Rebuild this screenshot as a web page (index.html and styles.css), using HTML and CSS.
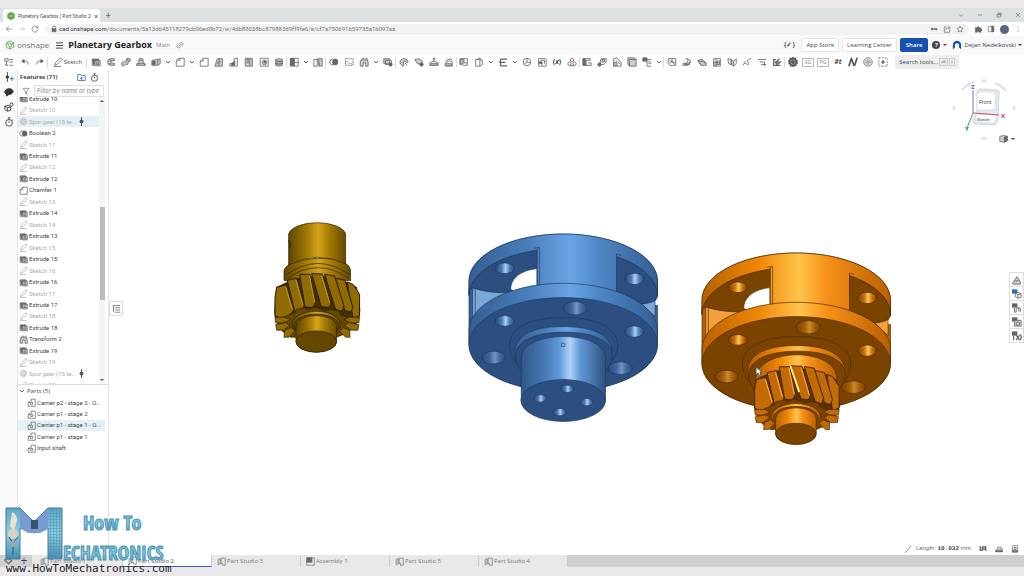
FILE: index.html
```html
<!DOCTYPE html>
<html lang="en">
<head>
<meta charset="utf-8">
<title>Planetary Gearbox | Part Studio 2</title>
<link rel="stylesheet" href="styles.css">
</head>
<body>
<svg class="defs" aria-hidden="true">
  <defs>
    <linearGradient id="blueRim"><stop offset="0" stop-color="#355e92"/><stop offset=".3" stop-color="#487cb9"/><stop offset=".54" stop-color="#6ba4e6"/><stop offset=".68" stop-color="#4f88c8"/><stop offset="1" stop-color="#345e93"/></linearGradient>
    <linearGradient id="blueBlock" gradientUnits="userSpaceOnUse" x1="27" x2="593" y1="0" y2="0" href="#blueRim"/>
    <linearGradient id="blueShaft"><stop offset="0" stop-color="#315886"/><stop offset=".25" stop-color="#4576b0"/><stop offset=".45" stop-color="#5d97d8"/><stop offset=".58" stop-color="#b0d3fb"/><stop offset=".7" stop-color="#6198d6"/><stop offset="1" stop-color="#2d5280"/></linearGradient>
    <linearGradient id="blueHole"><stop offset="0" stop-color="#25456f"/><stop offset=".35" stop-color="#4b7bb2"/><stop offset=".55" stop-color="#add0f3"/><stop offset=".75" stop-color="#4e82bd"/><stop offset="1" stop-color="#2a4c78"/></linearGradient>
    <linearGradient id="orangeRim"><stop offset="0" stop-color="#b56000"/><stop offset=".3" stop-color="#ef8706"/><stop offset=".52" stop-color="#ffc44c"/><stop offset=".66" stop-color="#f79018"/><stop offset="1" stop-color="#b96000"/></linearGradient>
    <linearGradient id="orangeBlock" gradientUnits="userSpaceOnUse" x1="27" x2="593" y1="0" y2="0" href="#orangeRim"/>
    <linearGradient id="orangeHole"><stop offset="0" stop-color="#703d00"/><stop offset=".35" stop-color="#c87008"/><stop offset=".55" stop-color="#ffc65c"/><stop offset=".75" stop-color="#cf7408"/><stop offset="1" stop-color="#764000"/></linearGradient>
    <linearGradient id="goldRim"><stop offset="0" stop-color="#604500"/><stop offset=".3" stop-color="#9b7400"/><stop offset=".52" stop-color="#d5a41c"/><stop offset=".7" stop-color="#a87d00"/><stop offset="1" stop-color="#654900"/></linearGradient>
    <symbol id="carrier" viewBox="0 0 630 620">
      <path class="m-rim" d="M27 168A283 141 0 0 1 593 168V359H27z"/>
      <path class="m-face" d="M27 211A283 141 0 0 1 593 211C594 222 586 232 540 237L440 240 150 205Q70 200 27 190z"/>
      <path class="m-rim" d="M27 168A283 141 0 0 1 593 168V211A283 141 0 0 0 27 211z"/>
      <path class="m-pillar" d="M38 189Q90 206 145 203L60 262 38 285z"/>
      <path class="m-line" d="M46 192V274"/>
      <path class="m-gap" d="M152 193C153 158 185 136 231 131V184L162 199z"/>
      <path class="m-rim-flat" d="M232 60Q350 52 470 80V210L232 190z"/>
      <path class="m-line" d="M222 70l17-2V190M470 205V87l14 5M232 70V190"/>
      <path class="m-pillar" d="M545 238Q575 234 586 227V275z"/>
      <path class="m-gap-plain" d="M595 214V240H587V229z"/>
      <path class="m-rim" d="M27 316A283 141 0 0 1 593 316V359A283 141 0 0 1 27 359z"/>
      <ellipse class="m-face" cx="310" cy="359" rx="283" ry="141"/>
      <g class="m-hole">
        <ellipse cx="134" cy="130" rx="29" ry="16"/><ellipse cx="523" cy="162" rx="29" ry="17"/>
        <ellipse cx="134" cy="288" rx="29" ry="16"/><ellipse cx="523" cy="320" rx="29" ry="17"/>
      </g>
      <g class="m-hole-dim">
        <ellipse cx="346" cy="250" rx="37" ry="20"/><ellipse cx="101" cy="398" rx="36" ry="19"/><ellipse cx="481" cy="430" rx="37" ry="19"/>
      </g>
      <path class="m-face" d="M170 415C130 370 130 278 310 278S495 370 450 415z"/>
      <path class="m-rim" d="M182 428C145 375 160 305 310 305S475 375 440 428z"/>
      <path class="m-face" d="M184 438C145 385 170 324 310 322S485 385 437 438z"/>
    </symbol>
    <symbol id="pinion" viewBox="0 0 340 450">
      <path class="m-deep" d="M50 232Q172 165 290 232L300 300Q300 350 250 372H90Q42 350 44 300z"/>
      <g class="m-tooth">
        <path d="M262 216l17 7 20 30v65l-20 6z"/><path d="M226 205l29 6 24 82-7 14-17-5z"/><path d="M194 193l30 5 28 90-5 16-20-5z"/>
        <path d="M155 191l32 1 26 90-7 11-22-3z"/><path d="M119 194l31-1 17 85-9 15-23-2z"/>
        <path d="M82 211l28-6 23 80-5 19-23 4z"/><path d="M50 232l28-7 24 76-27 29-30-12v-55z"/>
      </g>
      <path class="m-shine" d="M148 196l16 80M185 197l24 82M108 210l20 74M77 230l20 68"/>
      <path class="m-face" d="M70 322l34-14 6-10 24-4 10 6 16-8 22 4 10 8 22-6 22 6 8 12 26 8-5 44-35 14H92l-25-18z"/>
      <g class="m-stub"><path d="M45 322h31l15 7-18 10H47zM47 344l30-6 13 8-19 15H50zM74 361l20-8 11 11-18 18H72zM299 322h-31l-15 7 18 10h26zM297 344l-30-6-13 8 19 15h21zM270 361l-20-8-11 11 18 18h13z"/></g>
      <ellipse class="m-rim" cx="169" cy="343" rx="73" ry="39"/>
      <ellipse class="m-face" cx="169" cy="347" rx="67" ry="34"/>
      <path class="m-rim" d="M108 348A61 31 0 0 1 230 348V395A61 32 0 0 1 108 395z"/>
      <ellipse class="m-face" cx="169" cy="395" rx="61" ry="32"/>
    </symbol>
    <symbol id="i-ext" viewBox="0 0 12 12"><path d="M1.500 2.500V10h2M1.500 2.500h7L11 4.500"/><path class="f" d="M2 3h7v1.500H5V9H3z"/><path class="g" d="M4.500 4.500H11v6H4.500z"/><path d="M6.500 6.500h2.500v2.500H6.500z"/></symbol>
    <symbol id="i-pen" viewBox="0 0 12 12"><path d="M2 10l1-3 6-6 2 2-6 6zM1 11.500h9"/></symbol>
    <symbol id="i-gear" viewBox="0 0 12 12"><circle cx="6" cy="6" r="4.600" stroke-dasharray="1.600 1.200"/><circle cx="6" cy="6" r="3.300"/><circle cx="6" cy="6" r="1.300"/></symbol>
    <symbol id="i-bool" viewBox="0 0 12 12"><ellipse cx="4.500" cy="6" rx="3.500" ry="3.500"/><ellipse class="f" cx="7.500" cy="6" rx="3.200" ry="3.500"/></symbol>
    <symbol id="i-cham" viewBox="0 0 12 12"><path d="M1.500 11V5L5 1.500h6V11zM5 1.500V5H1.500"/></symbol>
    <symbol id="i-trans" viewBox="0 0 12 12"><path class="g" d="M1.500 5L4 3.500h5L11 6v5H8V7H5v4H1.500z"/><path d="M2 5L5 1l2 2 2-2 2 4"/></symbol>
    <symbol id="i-part" viewBox="0 0 12 12"><path d="M5.500 1.500H11V11H1.500V6h3v2.500h3V6h-2zM1.500 6L4 4.500"/></symbol>
    <symbol id="i-studio" viewBox="0 0 12 12"><path d="M5.500 1.500H11V11H7.500V8.500h-2zM1.500 3.500L4 2v7l-2.500 1.500zM4 4h1.500M4 9h2"/></symbol>
    <symbol id="i-chev" viewBox="0 0 6 6"><path d="M1 2l2 2 2-2"/></symbol>
    <symbol id="i-roll" viewBox="0 0 12 12"><path d="M6 0v12"/><circle class="f" cx="6" cy="6" r="2"/></symbol>
    <symbol id="i-hex" viewBox="0 0 12 12"><path d="M6 1l4.500 2.500v5L6 11 1.500 8.500v-5zM6 3.500l2.200 1.300v2.400L6 8.500 3.800 7.200V4.800z"/></symbol>
    <symbol id="i-watch" viewBox="0 0 12 12"><circle cx="6" cy="7" r="4"/><path d="M4.500 1h3M6 1v2M6 7V5M9.500 3l1 1"/></symbol>
  </defs>
</svg>

<div class="browser-tabs">
  <div class="browser-tab"><svg class="ico green"><use href="#i-hex"/></svg><span>Planetary Gearbox | Part Studio 2</span><button aria-label="Close tab">×</button></div>
  <button class="new-tab" aria-label="New tab">+</button>
  <div class="win-buttons">
    <button aria-label="Search tabs"><svg class="ico" viewBox="0 0 12 12"><path d="M3 5l3 3 3-3"/></svg></button>
    <button aria-label="Minimize"><svg class="ico" viewBox="0 0 12 12"><path d="M3 6h6"/></svg></button>
    <button aria-label="Restore"><svg class="ico" viewBox="0 0 12 12"><path d="M3 5h5v4H3zM5 5V3h4v4H8"/></svg></button>
    <button aria-label="Close"><svg class="ico" viewBox="0 0 12 12"><path d="M3 3l6 6M9 3L3 9"/></svg></button>
  </div>
</div>
<div class="address-row">
  <button aria-label="Back"><svg class="ico" viewBox="0 0 12 12"><path d="M11 6H2M6 2L2 6l4 4"/></svg></button>
  <button class="faint" aria-label="Forward"><svg class="ico" viewBox="0 0 12 12"><path d="M2 6h8M7 3l3 3-3 3"/></svg></button>
  <button aria-label="Reload"><svg class="ico" viewBox="0 0 12 12"><path d="M10 4a4.500 4.500 0 1 0 .5 3M10.500 1v3.500H7"/></svg></button>
  <div class="address">
    <svg class="ico lock" viewBox="0 0 12 12"><path class="f" d="M3 5.500h6V10H3z"/><path d="M4 5V3.500a2 2 0 0 1 4 0V5"/></svg>
    <a href="#"><b>cad.onshape.com</b>/documents/5a13d645118279cb06ed8b72/w/4db88038bc879883d9ff9fe6/e/cf7a750691b59735a1b097aa</a>
    <span class="grow"></span>
    <svg class="ico" viewBox="0 0 12 12"><circle class="f" cx="3" cy="6" r="1.500"/><path stroke-width="2" d="M5 6h6M9.500 6v2"/></svg>
    <svg class="ico" viewBox="0 0 12 12"><path d="M5 3H2v8h8V7M4 8q0-4 6-4M8 1.500L11 4 8 6"/></svg>
    <svg class="ico" viewBox="0 0 12 12"><path d="M6 1.500l1.400 3 3.300.4-2.400 2.300.6 3.300L6 9l-2.900 1.500.6-3.300L1.300 4.900l3.300-.4z"/></svg>
  </div>
  <button aria-label="Extensions"><svg class="ico" viewBox="0 0 12 12"><path class="f" d="M2 4h2.500a1.500 1.500 0 1 1 3 0H10v2.500a1.500 1.500 0 1 1 0 2V11H7.500a1.500 1.500 0 0 0-3 0H2V8.500a1.500 1.500 0 0 0 0-2z"/></svg></button>
  <button aria-label="Side panel"><svg class="ico" viewBox="0 0 12 12"><path d="M2 2h8v8H2z"/><path class="f" d="M7 2h3v8H7z"/></svg></button>
  <button class="avatar" aria-label="Profile"></button>
  <button aria-label="Browser menu"><svg class="ico" viewBox="0 0 12 12"><path d="M6 2v1.500M6 5.500V7M6 9v1.500"/></svg></button>
</div>

<header class="app-header">
  <svg class="logo-mark" viewBox="0 0 12 12"><path d="M6 1l4.500 2.500v5L6 11 1.500 8.500v-5zM6 3.500l2.200 1.300v2.400L6 8.500 3.800 7.200V4.800zM1.500 3.500l2.300 1.300M10.500 3.500L6 6M6 8.500V11"/></svg>
  <span class="brand">onshape</span>
  <button class="menu" aria-label="Menu"><svg viewBox="0 0 8 8"><path d="M0 1h8M0 4h8M0 7h8"/></svg></button>
  <h1>Planetary Gearbox</h1><span class="branch">Main</span>
  <button aria-label="Copy link"><svg class="ico" viewBox="0 0 12 12"><path d="M5 7.500L8 4.500M5 4.500l2-2a2.200 2.200 0 0 1 3 3l-2 2M7 8l-2 2a2.200 2.200 0 0 1-3-3l2-2"/></svg></button>
  <span class="grow"></span>
  <button class="braces" aria-label="Feature script">{✓}</button>
  <button class="boxed">App Store</button>
  <button class="boxed">Learning Center</button>
  <button class="boxed share">Share</button>
  <button class="help" aria-label="Help"><b>?</b><i class="caret"></i></button>
  <button class="user"><svg viewBox="0 0 12 12"><path class="head" d="M1 11V6a5 5 0 0 1 10 0v5L8.500 9V6.500a2.500 2.500 0 0 0-5 0V9z"/></svg>Dejan Nedelkovski<i class="caret"></i></button>
</header>

<div class="toolbar" role="toolbar" aria-label="Feature tools">
  <button aria-label="Feature list"><svg viewBox="0 0 12 12"><path d="M1 2h4v3H1zM3 5v5h2M6.500 3H11M6.500 6H11M6.500 10H11M1 8l2 2"/></svg></button>
  <button class="undo" aria-label="Undo"><svg viewBox="0 0 12 12"><path class="f" d="M2 5l3-2v4z"/><path d="M4 5h3q3 0 3 4"/></svg></button>
  <button aria-label="Redo"><svg viewBox="0 0 12 12"><path class="f" d="M10 5L7 3v4z"/><path d="M8 5H5Q2 5 2 9"/></svg></button>
  <i class="sep"></i>
  <button class="sketch"><svg><use href="#i-pen"/></svg>Sketch</button>
  <i class="sep last-left"></i>
  <button aria-label="Extrude"><svg><use href="#i-ext"/></svg></button>
  <button aria-label="Revolve"><svg viewBox="0 0 12 12"><path class="g" d="M10 2H6a4 4 0 0 0 0 8h4V7.500H7a1.500 1.500 0 0 1 0-3h3z"/><path d="M4 3l3 2M3 9l3-2"/></svg></button>
  <button aria-label="Sweep"><svg viewBox="0 0 12 12"><path class="g" d="M1 7l3-2 2 1 1-4h4v3H9L8 9 5 8.500 3 11 1 10z"/><path d="M7 2l2 3"/></svg></button>
  <button aria-label="Loft"><svg viewBox="0 0 12 12"><path class="g" d="M4 2h4l1 5 2 3H1l2-3z"/><path d="M1 10V8h10v2M4 4h4"/></svg></button>
  <button aria-label="Thicken"><svg viewBox="0 0 12 12"><path class="g" d="M1 4l7-1 3-1v6l-3 2H1z"/><path class="f" d="M2 5h3v4H2z"/><path d="M8 3v7"/></svg></button>
  <button class="chev" aria-label="More solids"><svg><use href="#i-chev"/></svg></button>
  <button aria-label="Fillet"><svg viewBox="0 0 12 12"><path d="M1.500 11V6q0-4.500 4.500-4.500h5V11zM6 1.500V4H3"/></svg></button>
  <button class="chev" aria-label="More fillets"><svg><use href="#i-chev"/></svg></button>
  <button aria-label="Chamfer"><svg><use href="#i-cham"/></svg></button>
  <button aria-label="Draft"><svg viewBox="0 0 12 12"><path class="g" d="M4 2h6v9H1z"/><path d="M6 2v9M3 8l5-3"/></svg></button>
  <button aria-label="Rib"><svg viewBox="0 0 12 12"><path d="M1 11V8l5-1V2l4-1v10z"/><path class="f" d="M3 8l4-3v5H3z"/></svg></button>
  <button aria-label="Shell"><svg viewBox="0 0 12 12"><path class="g" d="M1.500 1.500H10V11H1.500z"/><path d="M3 3h3M3 5h3M3 7h3M7 2v8"/></svg></button>
  <button aria-label="Hole"><svg viewBox="0 0 12 12"><path d="M1.500 1.500H11V11H1.500z"/><circle class="g" cx="6.500" cy="6.500" r="2.800"/><path class="f" d="M6 5h2v2H6z"/></svg></button>
  <button aria-label="External thread"><svg viewBox="0 0 12 12"><path class="g" d="M2 3q4-2 8 0v7q-4 2-8 0z"/><path stroke-width="1.500" d="M2 4.500q4 2 8 0M2 7.500q4 2 8 0"/></svg></button>
  <i class="sep tight"></i>
  <button aria-label="Linear pattern"><svg viewBox="0 0 12 12"><path d="M1.500 1.500H11V11H1.500zM6.500 1.500V11M1.500 6.500H11"/><path class="f" d="M2 2h4v4H2zM2 7h4v3H2z"/></svg></button>
  <button class="chev" aria-label="More patterns"><svg><use href="#i-chev"/></svg></button>
  <button aria-label="Mirror"><svg viewBox="0 0 12 12"><path class="g" d="M7 2h4v9H7z"/><path d="M1 3h4v8H1zM5 1l3 9"/></svg></button>
  <i class="sep"></i>
  <button aria-label="Boolean"><svg><use href="#i-bool"/></svg></button>
  <button aria-label="Split"><svg viewBox="0 0 12 12"><path d="M2 2h9v8H2zM1 7q3-3 5 0t5-1" stroke-dasharray="2 1"/></svg></button>
  <button aria-label="Transform"><svg><use href="#i-trans"/></svg></button>
  <button class="chev" aria-label="More transforms"><svg><use href="#i-chev"/></svg></button>
  <button aria-label="Delete part"><svg viewBox="0 0 12 12"><path class="g" d="M1 2h7v6H1z"/><path d="M3 4h7v5H3z"/><circle class="f" cx="9" cy="9" r="2"/></svg></button>
  <i class="sep"></i>
  <button aria-label="Modify fillet"><svg viewBox="0 0 12 12"><path class="g" d="M1 7q1-5 5-5t5 4L9 7Q8 4 5 6l1 4-2 1z"/><path d="M7 7l3 3"/></svg></button>
  <button aria-label="Delete face"><svg viewBox="0 0 12 12"><path class="g" d="M1 3l5-1 4 3-1 4-5-1z"/><circle class="f" cx="9" cy="9" r="2"/></svg></button>
  <button aria-label="Move face"><svg viewBox="0 0 12 12"><path d="M1 7l4-2 6 2v3H1zM6 6V1M4.500 3L6 1l1.500 2"/><path class="g" d="M2 8h8v2H2z"/></svg></button>
  <button aria-label="Replace face"><svg viewBox="0 0 12 12"><path d="M2 5q4-4 8-2M1 10l2-4q4-3 7 0v5H2z"/><path class="g" d="M2 8h7v2H2z"/></svg></button>
  <i class="sep tight"></i>
  <button aria-label="Offset surface"><svg viewBox="0 0 12 12"><path d="M1 2h9v8H7L1 9zM6 2v5h4"/><path class="g" d="M2 3h3v5H2z"/></svg></button>
  <button aria-label="Plane"><svg viewBox="0 0 12 12"><path d="M2 3h5v8H2zM4 3l2-2 4 3v5l-3 2M7 3l3 1"/></svg></button>
  <button class="chev" aria-label="More planes"><svg><use href="#i-chev"/></svg></button>
  <button aria-label="Frame"><svg viewBox="0 0 12 12"><path stroke-width="1.500" d="M3 2.500h8M1 6.500h8M3 10.500h8M3 2v9"/></svg></button>
  <button class="chev" aria-label="More frames"><svg><use href="#i-chev"/></svg></button>
  <button aria-label="Mate connector"><svg viewBox="0 0 12 12"><circle cx="6" cy="6" r="4.500"/><path d="M6 1.500V6l4 1M3 8l3-2"/></svg></button>
  <button aria-label="Import"><svg viewBox="0 0 12 12"><path d="M2 2h8l1 1v8H2zM2 6h4v4M4 4h5v4"/><path class="f" d="M3 6h3v2H3z"/></svg></button>
  <button class="txt" aria-label="Variable">(<em>x</em>)</button>
  <button aria-label="Composite part"><svg viewBox="0 0 12 12"><circle cx="6" cy="3.500" r="2"/><circle cx="3" cy="8" r="2"/><circle cx="9" cy="8" r="2"/><path d="M3 10.500h6"/></svg></button>
  <i class="sep tight"></i>
  <button aria-label="Sheet metal"><svg viewBox="0 0 12 12"><path class="f" d="M1 2h3v8H1z"/><path d="M3 2h7v2H5v6h6V7H7M3 10h3"/></svg></button>
  <button aria-label="Flange"><svg viewBox="0 0 12 12"><path d="M5 2h6v4L8 9H4V5z"/><path class="g" d="M6 3h3v3H6z"/><circle class="f" cx="3" cy="9" r="2"/></svg></button>
  <button aria-label="Hem"><svg viewBox="0 0 12 12"><path d="M2 11V2l4-1 5 6v4zM5 4v6M7 5l3 4"/><path class="g" d="M2 7h4v3H2z"/></svg></button>
  <button aria-label="Tab"><svg viewBox="0 0 12 12"><path class="g" d="M1 1h8l2 2v8H3L1 9z"/><path d="M3 3h8M3 3v8"/></svg></button>
  <button aria-label="Bend"><svg viewBox="0 0 12 12"><path class="f" d="M1 1h5v4H1z"/><path d="M3 3h8M6 6h5M6 6v5h5M8 8h3"/></svg></button>
  <button class="chev" aria-label="More sheet metal"><svg><use href="#i-chev"/></svg></button>
  <i class="sep"></i>
  <button aria-label="Corner"><svg viewBox="0 0 12 12"><path d="M1.500 2h9v8h-7l-2-2zM3 4l7 5M6 2v4h4M3 8l3-3"/></svg></button>
  <button aria-label="Joint"><svg viewBox="0 0 12 12"><path d="M5 1.500Q9 4 6 7L1 8v2h6q4-2 3-6z"/><path class="g" d="M3 8h4l2-2v3H3z"/></svg></button>
  <button aria-label="Form"><svg viewBox="0 0 12 12"><path class="g" d="M1 4l5-1 5 4v3H5z"/><path d="M2 6q5-3 8 2M1 4l4 6"/></svg></button>
  <button aria-label="Flat pattern"><svg viewBox="0 0 12 12"><path d="M2 2h8v9H2zM5 2v9M5 5h5"/><path class="g" d="M2 6h3v4H2zM6 6h3v3H6z"/></svg></button>
  <button aria-label="Ruled surface"><svg viewBox="0 0 12 12"><path class="g" d="M5 3l3 2v6L5 9z"/><path d="M1 2l4 1v6L2 8zM8 5l3-3v6l-3 3"/></svg></button>
  <button aria-label="Curve"><svg viewBox="0 0 12 12"><path d="M1 10q3-5 5-1 3 1 1-3-1-4 4-4M2 7l2-2"/></svg></button>
  <button aria-label="Project curve"><svg viewBox="0 0 12 12"><path d="M1 3h10M3 6h6M5 9h6M9 6v5"/></svg></button>
  <button aria-label="Fill"><svg viewBox="0 0 12 12"><path stroke-width="1.500" d="M2 2v8h8M2 3h3M4 6h6L6 9zM9 2L5 6"/></svg></button>
  <i class="sep"></i>
  <button aria-label="Spur gear"><svg class="bold" viewBox="0 0 12 12"><circle class="g" cx="6" cy="6" r="4"/><circle cx="6" cy="6" r="5" stroke-dasharray="2 1.100"/><circle cx="6" cy="6" r="1.500"/></svg></button>
  <button class="code">SG</button>
  <button class="code">PG</button>
  <button class="txt" aria-label="Number tool"><em>#t</em></button>
  <button aria-label="Spline"><svg class="bold" viewBox="0 0 12 12"><path d="M1 11L4 2q1 1 2 5t2 3l3-9"/></svg></button>
  <button aria-label="Bearing"><svg viewBox="0 0 12 12"><circle cx="6" cy="6" r="5"/><circle cx="6" cy="6" r="3" stroke-dasharray="1.500 1"/><circle cx="6" cy="6" r="1.500"/></svg></button>
  <button aria-label="Add custom feature"><svg viewBox="0 0 12 12"><path stroke-dasharray="2 1.500" d="M1 1h10v10H1z"/><path stroke-width="2" d="M6 4v4M4 6h4"/></svg></button>
  <button class="search">Search tools... <kbd>alt</kbd><kbd>c</kbd></button>
</div>

<div class="workspace">
  <nav class="rail" aria-label="Panels">
    <button aria-label="Add version"><svg viewBox="0 0 12 12"><path d="M4 0v12"/><circle class="f" cx="4" cy="6" r="1.500"/><path class="blue" d="M7 8h5M9.500 5.500v5"/></svg></button>
    <button aria-label="Comments"><svg viewBox="0 0 12 12"><path class="f" d="M6 2c7 0 6 7 0 7L3 11V8.500C-1 7 1 2 6 2z"/></svg></button>
    <button aria-label="Configurations"><svg viewBox="0 0 12 12"><path d="M1 5l4-1 3 2v4l-4 1-3-2zM1 5l3 2v4M4 7l4-1"/><circle cx="9" cy="3" r="2"/></svg></button>
    <button aria-label="History"><svg><use href="#i-watch"/></svg></button>
  </nav>
  <aside class="panel">
    <div class="panel-head"><h2>Features (71)</h2>
      <button aria-label="Add folder"><svg class="blue" viewBox="0 0 12 12"><path d="M1 2h4l1 1.500h5V10H1zM6 5v4M4 7h4"/></svg></button>
      <button aria-label="Rebuild times"><svg class="dark"><use href="#i-watch"/></svg></button>
    </div>
    <div class="filter"><svg viewBox="0 0 12 12"><path d="M1.500 2h9L7 6.500V11L5 9.500v-3z"/></svg><input type="text" aria-label="Filter features" placeholder="Filter by name or type"></div>
    <div class="feature-scroll">
      <ul class="features">
        <li><svg><use href="#i-ext"/></svg>Extrude 10</li>
        <li class="off"><svg><use href="#i-pen"/></svg>Sketch 10</li>
        <li class="off sel"><svg><use href="#i-gear"/></svg>Spur gear (15 te...<svg class="roll"><use href="#i-roll"/></svg></li>
        <li><svg><use href="#i-bool"/></svg>Boolean 2</li>
        <li class="off"><svg><use href="#i-pen"/></svg>Sketch 11</li>
        <li><svg><use href="#i-ext"/></svg>Extrude 11</li>
        <li class="off"><svg><use href="#i-pen"/></svg>Sketch 12</li>
        <li><svg><use href="#i-ext"/></svg>Extrude 12</li>
        <li><svg><use href="#i-cham"/></svg>Chamfer 1</li>
        <li class="off"><svg><use href="#i-pen"/></svg>Sketch 13</li>
        <li><svg><use href="#i-ext"/></svg>Extrude 14</li>
        <li class="off"><svg><use href="#i-pen"/></svg>Sketch 14</li>
        <li><svg><use href="#i-ext"/></svg>Extrude 13</li>
        <li class="off"><svg><use href="#i-pen"/></svg>Sketch 15</li>
        <li><svg><use href="#i-ext"/></svg>Extrude 15</li>
        <li class="off"><svg><use href="#i-pen"/></svg>Sketch 16</li>
        <li><svg><use href="#i-ext"/></svg>Extrude 16</li>
        <li class="off"><svg><use href="#i-pen"/></svg>Sketch 17</li>
        <li><svg><use href="#i-ext"/></svg>Extrude 17</li>
        <li class="off"><svg><use href="#i-pen"/></svg>Sketch 18</li>
        <li><svg><use href="#i-ext"/></svg>Extrude 18</li>
        <li><svg><use href="#i-trans"/></svg>Transform 2</li>
        <li><svg><use href="#i-ext"/></svg>Extrude 19</li>
        <li class="off"><svg><use href="#i-pen"/></svg>Sketch 19</li>
        <li class="off"><svg><use href="#i-gear"/></svg>Spur gear (15 te...<svg class="roll"><use href="#i-roll"/></svg></li>
        <li class="off"><svg><use href="#i-pen"/></svg>Sketch 20</li>
      </ul>
      <div class="scrollbar"><i class="up"></i><i class="thumb"></i><i class="down"></i></div>
    </div>
    <h2 class="parts-head"><svg><use href="#i-chev"/></svg>Parts (5)</h2>
    <ul class="parts">
      <li><svg><use href="#i-part"/></svg>Carrier p2 - stage 2 - O...</li>
      <li><svg><use href="#i-part"/></svg>Carrier p1 - stage 2</li>
      <li class="sel"><svg><use href="#i-part"/></svg>Carrier p1 - stage 1 - O...</li>
      <li><svg><use href="#i-part"/></svg>Carrier p1 - stage 1</li>
      <li><svg><use href="#i-part"/></svg>Input shaft</li>
    </ul>
  </aside>

  <main class="viewport">
    <svg class="model" viewBox="109 70 915 485" role="img" aria-label="Planetary gearbox parts">
      <g class="gold" transform="translate(260 210) scale(.333)">
        <path class="m-rim" d="M72 184C72 140 272 125 272 184V212H72z"/>
        <path class="m-rim" d="M86 72A86 38 0 0 1 257 72V162Q172 120 86 165z"/>
        <path class="m-hole-dim" d="M87 90q9 5 2 25z"/>
        <path class="m-line" d="M76 197Q172 125 270 195M80 207Q172 140 266 205"/>
        <use href="#pinion" width="340" height="450"/>
      </g>
      <g class="blue-part" transform="translate(460 225) scale(.333)">
        <use href="#carrier" width="630" height="620"/>
        <path class="m-shaft" d="M184 395C190 315 430 315 437 395V527A127 63 0 0 1 184 527z"/>
        <ellipse class="m-face" cx="310" cy="527" rx="127" ry="63"/>
        <g class="m-hole"><ellipse cx="322" cy="492" rx="20" ry="11"/><ellipse cx="241" cy="521" rx="20" ry="11"/><ellipse cx="380" cy="532" rx="20" ry="11"/><ellipse cx="299" cy="562" rx="20" ry="11"/></g>
        <path class="origin" d="M305 355h10v10h-10z"/>
      </g>
      <g class="orange-part" transform="translate(693 244) scale(.333)">
        <use href="#carrier" width="630" height="620"/>
        <path class="m-rim" d="M188 400C200 310 425 310 432 400V430H188z"/>
        <use href="#pinion" x="140" y="175" width="340" height="450"/>
        <path class="streak" d="M293 367l26 78"/>
      </g>
      <path class="cursor" d="M756 367v8l2-2 2 4 1-1-1-4h2z"/>
    </svg>
    <button class="list-toggle" aria-label="Toggle list"><svg viewBox="0 0 12 12"><path d="M1 2h10M4 5h7M4 8h7M4 11h7M2 2v9"/></svg></button>
    <svg class="view-cube" viewBox="0 0 70 70" role="img" aria-label="View cube">
      <g class="pale"><path d="M31 10l3-4 3 4zM31 65l3 4 3-4zM5 33l-3 3 3 3zM63 33l3 3-3 3z"/><path class="arc" d="M12 18q5-6 12-8M45 11q6 2 11 8"/></g>
      <path class="cube" d="M27 20q0-3 3-3l16 1q4 0 3 4l-1 26q-1 5-5 5l-16-1q-5 0-4-4l4-9z"/>
      <path class="cube-face" d="M27 23q0-3 3-3h12q3 0 3 3v12q0 3-3 3H30q-3 0-3-3zM26 42l21 1-3 8-19-1z"/>
      <path class="ax-z" d="M23 18v23"/><path class="ax-x" d="M23 41l26 2"/><path class="ax-y" d="M23 41l-6 15"/>
      <text x="21" y="17" class="lz">Z</text><text x="51" y="46" class="lx">X</text><text x="15" y="59" class="ly">Y</text>
      <text x="29" y="32" class="face-name">Front</text><text x="27" y="49" class="face-small">Bottom</text>
    </svg>
    <button class="shade" aria-label="Display mode"><svg viewBox="0 0 12 12"><path class="g" d="M1 3l6-1 4 1v6l-4 2-6-1z"/><path class="f" d="M7 4l4-1v6l-4 2z"/></svg><i class="caret"></i></button>
    <div class="side-tools">
      <button class="off" aria-label="Appearance"><svg viewBox="0 0 12 12"><path class="g" d="M1 9l5-7 4 6v3H1z"/><path d="M3 7h5"/></svg></button>
      <button aria-label="Configuration table"><svg viewBox="0 0 12 12"><path class="bluef" d="M0 1h6v4H0z"/><path d="M4 5l3-1 4 2v4l-4 1-3-2zM4 5l3 2 4-1M7 7v4"/></svg></button>
      <button aria-label="Cut list"><svg viewBox="0 0 12 12"><path class="f" d="M0 1h6v4H0z"/><path d="M3 6v5h2V6h5v5M8 5v5"/></svg></button>
      <button aria-label="Custom table"><svg viewBox="0 0 12 12"><path class="f" d="M0 1h6v4H0z"/><path class="g" d="M3 4h8v7H3z"/><circle cx="7" cy="8" r="2"/></svg></button>
      <button aria-label="Variable table"><svg viewBox="0 0 12 12"><path class="f" d="M0 1h6v4H0z"/><path stroke-width="1.500" d="M2 5v6M5 5l4 6M9 5l-4 6M10 4q2 3 0 7"/></svg></button>
    </div>
    <div class="measure"><svg class="curve" viewBox="0 0 12 12"><path d="M1 11q3 0 5-4t5-6"/></svg><span>Length: <b>10.032</b> mm</span>
      <svg viewBox="0 0 12 12"><path stroke-width="2" d="M2 2v6h3V3h5v6M6 6h4"/></svg>
      <svg viewBox="0 0 12 12"><path d="M1 10h10V6H3zM4 6V3h5v3"/><path class="f" d="M1 8h10v2H1z"/></svg>
      <svg viewBox="0 0 12 12"><path d="M2 1h8v10H2z"/><circle class="g" cx="6" cy="5" r="2"/><path class="f" d="M2 8h8v2H2z"/></svg>
    </div>
  </main>
</div>

<footer class="doc-tabs">
  <button class="tab-tool" aria-label="Tab manager"><svg viewBox="0 0 12 12"><path stroke-width="2" d="M1 4l5-2 4 3-4 4z"/></svg></button>
  <button class="tab-tool" aria-label="New tab">+</button>
  <a href="#" class="first"><svg><use href="#i-studio"/></svg>Part Studio 1</a>
  <a href="#" class="active"><svg><use href="#i-studio"/></svg>Part Studio 2</a>
  <a href="#"><svg><use href="#i-studio"/></svg>Part Studio 3</a>
  <a href="#"><svg viewBox="0 0 12 12"><path d="M1 1h10v10H1z"/><path class="f" d="M1 1h7v6H1z"/></svg>Assembly 1</a>
  <a href="#"><svg><use href="#i-studio"/></svg>Part Studio 5</a>
  <a href="#"><svg><use href="#i-studio"/></svg>Part Studio 4</a>
</footer>

<div class="watermark">
  <svg viewBox="0 0 168 56" role="img" aria-label="How To Mechatronics">
    <defs>
      <linearGradient id="wm" x2="0" y2="1"><stop offset="0" stop-color="#5aa7c6"/><stop offset=".5" stop-color="#8fcfe4"/><stop offset="1" stop-color="#3f8db2"/></linearGradient>
      <pattern id="grid" width="3" height="3" patternUnits="userSpaceOnUse"><path d="M0 0H3V3" fill="none" stroke="#4f93b4" stroke-width="1"/></pattern>
    </defs>
    <path class="wm-m" d="M0 1h14l14 14L42 1h14v51H42V21L28 26 14 21v31H0z"/>
    <path fill="url(#grid)" d="M42 1h14v51H42z"/>
    <path fill="#789bd2" d="M14 2l14 14L42 2v20l-8 4H22l-8-5z"/>
    <path fill="#34556e" d="M25 13h7v9h-7z"/>
    <path fill="#e9e2ce" d="M6 5q5 2 5 8l-3 11-4-5z"/><circle cx="7" cy="27" r="5" fill="#d6d3c4"/><path stroke="#45545c" fill="none" d="M3 30l4 6 5-6M7 36v12"/><circle cx="7" cy="37" r="3" fill="#9aa9a6"/>
    <text x="77" y="23" class="wm-how">How To</text>
    <text x="57" y="53" class="wm-mech">ECHATRONICS</text>
  </svg>
  <span>www.HowToMechatronics.com</span>
</div>
</body>
</html>
```
FILE: styles.css
```css
* { box-sizing: border-box; }
body { margin: 0; min-height: 100vh; padding: 8px 0 9px; display: flex; flex-direction: column; background: #ebe8ec; color: #444; font: 6px/8px "Open Sans", "Noto Sans", sans-serif; }
button { border: 0; padding: 0; margin: 0; background: none; color: inherit; font: inherit; display: flex; align-items: center; justify-content: center; }
a { color: inherit; text-decoration: none; }
h1, h2, ul { margin: 0; padding: 0; list-style: none; }
svg { fill: none; stroke: #666; stroke-width: 1; flex: none; display: block; }
.f { fill: #666; }
.g { fill: #ccc; }
.defs { position: absolute; width: 0; height: 0; }
.ico { width: 8px; height: 8px; }
.grow { flex: 1; }
.caret { border: 2px solid transparent; border-top: 2px solid #444; border-bottom: 0; }

.browser-tabs { display: flex; height: 14px; background: #dee1e4; padding-left: 3px; }
.browser-tab { display: flex; align-items: center; gap: 3px; width: 97px; margin-top: 1px; padding: 0 4px; background: #fff; border-radius: 4px 4px 0 0; font: 5px/8px Lato, Roboto, sans-serif; }
.browser-tab span { flex: 1; white-space: nowrap; }
.browser-tab button { font-size: 8px; }
.green { stroke: #55a546; stroke-width: 2; }
.new-tab { width: 16px; font-size: 10px; }
.win-buttons { display: flex; gap: 11px; margin-left: auto; padding-right: 2px; }
.address-row { display: flex; align-items: center; height: 14px; padding: 0 2px 0 5px; gap: 5px; background: #fff; }
.faint { opacity: .45; }
.address { flex: 1; display: flex; align-items: center; gap: 5px; height: 11px; margin-left: 2px; padding: 0 5px 0 4px; border-radius: 6px; background: #f1f2f4; font: 6px/8px Roboto, sans-serif; color: #777; }
.lock { margin-right: -4px; }
.address b { font-weight: 400; color: #333; }
.avatar { width: 9px; height: 9px; border-radius: 50%; background: #59637f; }

.app-header { display: flex; align-items: center; height: 18px; padding: 0 2px 0 5px; background: #f9f9fc; }
.logo-mark { width: 10px; height: 10px; stroke: #5bad4e; }
.brand { margin-left: 2px; font-size: 8px; line-height: 12px; color: #777; }
.menu { margin: 0 5px 0 7px; }
.menu svg { width: 7px; height: 7px; stroke: #333; }
.app-header h1 { font-size: 9px; line-height: 14px; font-weight: 700; color: #222; }
.branch { margin: 0 6px 0 4px; font-size: 6px; color: #888; }
.app-header h1, .branch { white-space: nowrap; }
.braces { width: 12px; margin-right: 6px; font-weight: 600; font-size: 7px; }
.boxed { height: 14px; padding: 0 4px; margin-right: 3px; border: 1px solid #e4e4ea; border-radius: 2px; background: #fff; }
.share { padding: 0 5px; background: #1651b0; border-color: #1651b0; color: #fff; font-weight: 600; }
.help { gap: 3px; margin: 0 5px 0 1px; }
.help b { width: 8px; height: 8px; border-radius: 50%; background: #444; color: #fff; }
.user { gap: 2px; white-space: nowrap; }
.user svg { width: 10px; height: 10px; stroke: none; }
.head { fill: #1651b0; }

.toolbar { display: flex; align-items: center; height: 16px; gap: 3px; padding-left: 3px; background: #fff; }
.toolbar button { width: 12px; height: 12px; flex: none; }
.toolbar svg { width: 10px; height: 10px; }
.toolbar .chev { width: 6px; }
.toolbar .chev svg, .parts-head svg { width: 6px; height: 6px; }
.toolbar .undo { margin-left: 1px; }
.sep { width: 1px; height: 11px; margin: 0 -1px 0 -2px; background: #ddd; flex: none; }
.tight { margin: 0 -2px; }
.toolbar .sketch { width: 31px; gap: 1px; margin-left: 2px; }
.toolbar .last-left { margin: 0; }
.toolbar .txt { font-size: 7px; font-weight: 700; }
.toolbar .code { height: 9px; border: 1px solid #bbb; font-size: 5px; color: #888; }
.toolbar .bold { stroke-width: 2; stroke: #555; }
.toolbar .search { width: 64px; height: 14px; gap: 1px; margin-left: 3px; background: #ededed; white-space: nowrap; }
kbd { border: 1px solid #ccc; padding: 0 1px; font: 4px/6px "Open Sans", sans-serif; }

.workspace { flex: 1; display: flex; min-height: 0; background: #fff; }
.rail { width: 18px; display: flex; flex-direction: column; align-items: center; gap: 5px; padding-top: 2px; background: #fafafa; border-right: 1px solid #e5e5e5; }
.rail svg, .dark { width: 10px; height: 10px; stroke: #333; }
.rail .f { fill: #333; }
.blue, .rail .blue { stroke: #2766b8; }
.panel { width: 91px; border-right: 1px solid #e5e5e5; display: flex; flex-direction: column; }
.panel-head { display: flex; align-items: center; gap: 4px; height: 14px; padding: 0 9px 0 2px; }
.panel-head svg { width: 9px; height: 9px; }
.panel-head h2 { flex: 1; font-size: 6px; line-height: 8px; font-weight: 600; color: #222; white-space: nowrap; }
.filter { display: flex; align-items: center; gap: 4px; height: 13px; padding: 0 4px; }
.filter svg { width: 8px; height: 8px; }
.filter input { width: 70px; height: 12px; padding: 0 2px; border: 1px solid #e0e0e0; font: italic 6px/8px Inter, "Open Sans", sans-serif; }
.filter input::placeholder { color: #888; }
.feature-scroll { display: flex; height: 288px; overflow: hidden; border-bottom: 1px solid #ddd; }
.features { flex: 1; display: grid; grid-auto-rows: 1fr; height: 298px; margin-top: -4px; }
.features, .parts { font-family: Roboto, "Open Sans", sans-serif; }
.features li, .parts li { display: flex; align-items: center; gap: 1px; padding-left: 1px; white-space: nowrap; overflow: hidden; }
.features svg, .parts li svg { width: 9px; height: 9px; }
.features .off { color: #aaa; }
.features .off svg { stroke: #aaa; }
.features .off .roll { stroke: #222; margin-left: auto; margin-right: 15px; }
.sel { background: #e6f0f7; }
.scrollbar { width: 6px; margin-right: 3px; background: #f4f4f4; display: flex; flex-direction: column; align-items: center; }
.up { border: 2px solid transparent; border-top: 0; border-bottom: 2px solid #555; margin-top: 3px; }
.thumb { width: 5px; height: 93px; margin-top: 105px; background: #bcbcbc; }
.down { border: 2px solid transparent; border-bottom: 0; border-top: 2px solid #555; margin: auto 0 3px; }
.parts-head { display: flex; align-items: center; gap: 2px; height: 12px; padding-left: 1px; font-size: 6px; font-weight: 400; }
.parts { display: grid; grid-auto-rows: 1fr; height: 57px; margin-right: 3px; }
.parts li { padding-left: 9px; }

.viewport { flex: 1; position: relative; display: flex; min-width: 0; }
.model { flex: 1; min-width: 0; width: 100%; height: 100%; }
.list-toggle { position: absolute; left: 0; top: 231px; width: 14px; height: 15px; border: 1px solid #ddd; }
.list-toggle svg { width: 9px; height: 9px; }
.view-cube { position: absolute; right: 4px; top: 2px; width: 70px; height: 70px; }
.shade { position: absolute; right: 9px; top: 64px; gap: 3px; }
.shade svg { width: 9px; height: 9px; }
.side-tools { position: absolute; right: 0; top: 202px; display: flex; flex-direction: column; }
.side-tools button { width: 15px; height: 15px; border: 1px solid #ddd; margin-bottom: -1px; }
.side-tools svg { width: 10px; height: 10px; }
.side-tools .bluef { fill: #2f6eb9; stroke: #2f6eb9; }
.measure { position: absolute; right: 5px; bottom: 2px; display: flex; align-items: center; gap: 8px; color: #777; font-family: Roboto, sans-serif; }
.measure b { font: 700 6px/8px "Liberation Mono", monospace; color: #444; }
.measure svg { width: 8px; height: 8px; }
.measure .curve { margin-right: -4px; }

.pale { fill: #dde1ea; stroke: none; }
.arc { fill: none; stroke: #dde1ea; stroke-width: 2; }
.cube { fill: #e3e8f0; stroke: #cdd5e2; }
.cube-face { fill: #fff; stroke: #dce2ec; }
.ax-z { stroke: #7077dd; }
.ax-x { stroke: #d34863; }
.ax-y { stroke: #44a05a; }
.view-cube text { stroke: none; font: 700 6px "Open Sans", sans-serif; }
.lz { fill: #5862cc; }
.lx { fill: #d03050; }
.ly { fill: #30984a; }
.view-cube .face-name { font: 5px "Open Sans", sans-serif; fill: #333; }
.view-cube .face-small { font: italic 4px "Open Sans", sans-serif; fill: #333; }

.model { stroke-width: 2; stroke-linejoin: round; }
.gold { --rim: url(#goldRim); --face: #654800; --deep: #453100; --tooth: #8f6b00; --hole: url(#goldRim); --edge: #2a1d00; --shine: #b88e1c; }
.blue-part { --rim: url(#blueRim); --block: url(#blueBlock); --face: #2c4f7f; --hole: url(#blueHole); --edge: #1d3a60; --shaft: url(#blueShaft); --pillar: #7ca8d7; }
.orange-part { --rim: url(#orangeRim); --block: url(#orangeBlock); --face: #7b4300; --deep: #5a3200; --tooth: #c26a06; --hole: url(#orangeHole); --edge: #4a2800; --shine: #f5a030; --pillar: #f5a13a; }
.m-rim { fill: var(--rim); stroke: var(--edge); }
.m-rim-flat { fill: var(--block); stroke: none; }
.m-face { fill: var(--face); stroke: var(--edge); }
.m-deep { fill: var(--deep); stroke: var(--edge); }
.m-tooth { fill: var(--tooth); stroke: var(--edge); stroke-width: 3; }
.m-stub { fill: var(--tooth); stroke: var(--edge); }
.m-shine { stroke: var(--shine); stroke-width: 4; }
.m-pillar { fill: var(--pillar); stroke: var(--edge); }
.m-hole { fill: var(--hole); stroke: var(--edge); }
.m-hole-dim { fill: var(--hole); stroke: var(--edge); fill-opacity: .55; }
.m-shaft { fill: var(--shaft); stroke: var(--edge); }
.m-line { fill: none; stroke: var(--edge); }
.m-gap { fill: #fff; stroke: var(--edge); }
.m-gap-plain { fill: #fff; stroke: none; }
.origin { stroke: #444; stroke-width: 2; }
.streak { stroke: #ffed8a; stroke-width: 6; }
.cursor { fill: #fff; stroke: #555; stroke-width: 1; }

.doc-tabs { display: flex; height: 12px; background: #cfcfcf; }
.doc-tabs svg { width: 9px; height: 9px; stroke: #777; }
.doc-tabs a { display: flex; align-items: center; gap: 1px; width: 89px; padding-left: 5px; background: #e8e8e8; border-right: 1px solid #ccc; color: #777; }
.doc-tabs .first { width: 91px; padding-left: 8px; }
.doc-tabs .active { background: #fff; border-bottom: 1px solid #3566b8; color: #555; }
.tab-tool { width: 16px; font-size: 12px; }
.watermark { position: absolute; left: 6px; bottom: 1px; display: flex; flex-direction: column; }
.watermark svg { width: 168px; height: 56px; stroke: none; overflow: visible; }
.wm-m { fill: url(#wm); stroke: #4b7790; }
.wm-how, .wm-mech { fill: url(#wm); stroke: #4a93b3; font-family: Impact, "Open Sans Condensed", "Roboto Condensed", "Liberation Sans Narrow", "Liberation Sans", sans-serif; font-weight: 700; }
.wm-how { font-size: 20px; }
.wm-mech { font-size: 19px; }
.watermark span { font: 11px/12px "DejaVu Sans Mono", monospace; color: #222; }
```
